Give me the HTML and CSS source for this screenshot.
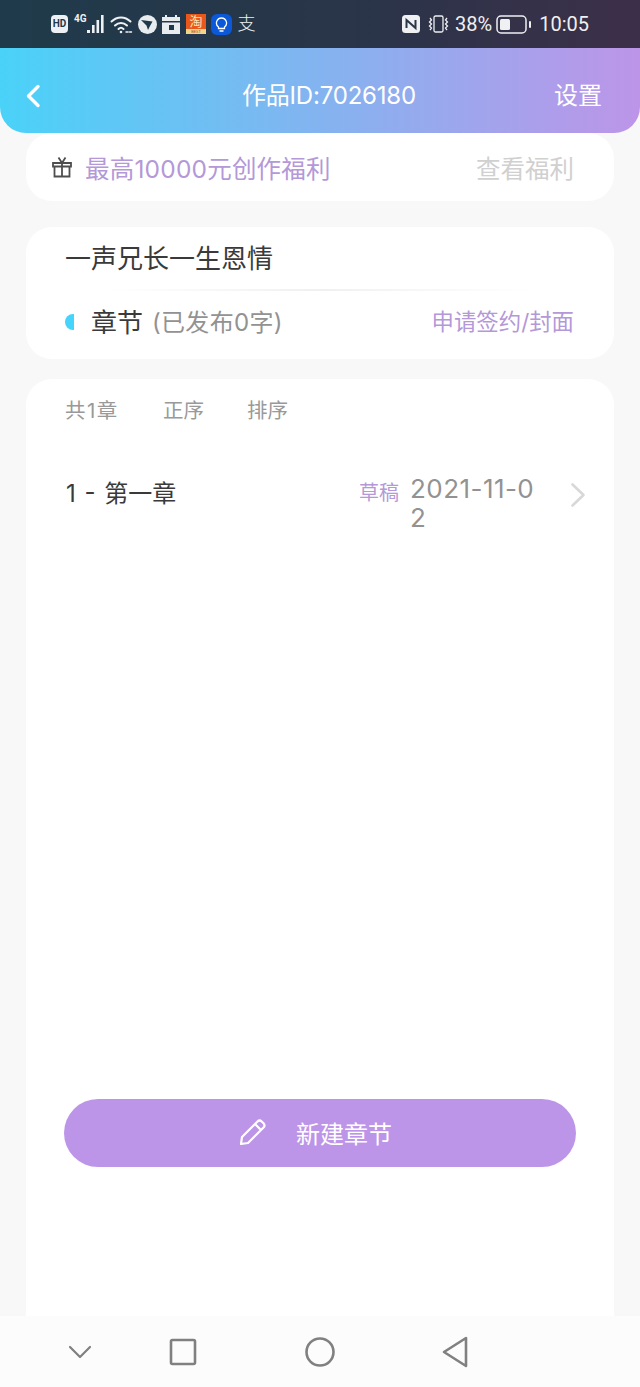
FILE: index.html
```html
<!DOCTYPE html>
<html lang="zh-CN">
<head>
  <meta charset="UTF-8" />
  <meta name="viewport" content="width=device-width, initial-scale=1.0"/>
  <title>作品管理</title>
  <link rel="stylesheet" href="styles.css">
</head>
<body>
  <div class="page">
    <!-- Android status bar -->
    <div class="statusbar">
      <div class="status-left">
        <span class="hd">HD</span>
        <span class="signal">
          <span class="net">4G</span>
          <svg width="19" height="20" viewBox="0 0 19 20"><path d="M1 16h3v3H1zM6 11h2.600v8H6zM10.500 6h2.600v13h-2.600zM15 1h2.600v18H15z" fill="#eef1f3"/></svg>
        </span>
        <svg class="wifi" width="23" height="19" viewBox="0 0 23 19" fill="none" stroke="#eef1f3" stroke-width="2" stroke-linecap="round">
          <path d="M1.500 6.500C7 1 15 1 20.500 6.500"/>
          <path d="M5 10.500c3.500-3.500 8.500-3.500 12 0"/>
          <path d="M8.500 14c1.500-1.500 3.500-1.500 5 0"/>
          <circle cx="11" cy="17" r="1.300" fill="#eef1f3" stroke="none"/>
          <path d="M16 17h6" stroke-width="1.500" stroke-dasharray="2 1.500"/>
        </svg>
        <svg width="19" height="19" viewBox="0 0 19 19"><circle cx="9.500" cy="9.500" r="9.500" fill="#e8ecef"/><path d="M3 5l11.500 1.500L12 11l-2 4-1.500-4.500z" fill="#20394a"/></svg>
        <svg class="cal" width="18" height="19" viewBox="0 0 18 19"><path d="M3 0h2v2h8V0h2v2h3v4H0V2h3zM0 7.500h18V19H0z" fill="#e8ecef"/><rect x="7" y="10" width="5" height="5" fill="#20394a"/></svg>
        <span class="taobao"><span class="taobao-top">淘</span><span class="taobao-bottom">BEST</span></span>
        <span class="bulb">
          <svg width="13" height="15" viewBox="0 0 13 15" fill="none" stroke="#fff" stroke-width="1.300"><path d="M6.500 1a5 5 0 0 0-3 9v1.500h6V10a5 5 0 0 0-3-9zM4.500 14h4"/></svg>
        </span>
        <span class="zhi">支</span>
      </div>
      <div class="status-right">
        <svg width="18" height="18" viewBox="0 0 18 18"><rect width="18" height="18" rx="3.500" fill="#eef0f2"/><path d="M4.500 13V5l9 8V5" fill="none" stroke="#2a3648" stroke-width="2"/></svg>
        <svg class="vib" width="23" height="18" viewBox="0 0 23 18" fill="none" stroke="#eef0f2" stroke-width="1.300"><rect x="7" y="1" width="9" height="16" rx="1.500"/><path d="M3 3l1.500 2-2 2 2 2-2 2 2 2-1.500 2M20 3l-1.500 2 2 2-2 2 2 2-2 2 1.500 2"/></svg>
        <span class="pct">38%</span>
        <svg class="batt" width="35" height="19" viewBox="0 0 35 19"><rect x="1" y="1" width="29" height="17" rx="4" fill="none" stroke="#eef0f2" stroke-width="1.500"/><rect x="4" y="4" width="10" height="11" rx="1.500" fill="#eef0f2"/><rect x="33" y="6" width="2" height="7" rx="1" fill="#eef0f2"/></svg>
        <span class="clock">10:05</span>
      </div>
    </div>

    <!-- title bar -->
    <header class="header">
      <svg class="back" width="16" height="24" viewBox="0 0 16 24" fill="none" stroke="#fff" stroke-width="3.400" stroke-linecap="round" stroke-linejoin="round"><path d="M13 2.500L3.500 12l9.500 9.500"/></svg>
      <h1 class="header-title">作品ID:7026180</h1>
      <a class="header-link">设置</a>
    </header>

    <div class="content">
      <section class="card welfare">
        <svg class="gift" width="22" height="22" viewBox="0 0 22 22" fill="none" stroke="#4e4e4e" stroke-width="1.800"><path d="M2 7h18v3.500H2zM3.500 10.500V20.500h15v-10M11 7v13.500M11 7L7.500 1.500M11 7l3.500-5.500"/></svg>
        <span class="welfare-text">最高10000元创作福利</span>
        <a class="welfare-link">查看福利</a>
      </section>

      <section class="card book">
        <div class="book-title">一声兄长一生恩情</div>
        <div class="divider"></div>
        <div class="book-row">
          <span class="half-dot"></span>
          <span class="book-label">章节</span>
          <span class="book-count">(已发布0字)</span>
          <a class="book-link">申请签约/封面</a>
        </div>
      </section>

      <section class="card chapters">
        <div class="tools">
          <span class="tool-count">共1章</span>
          <span class="tool-order">正序</span>
          <span>排序</span>
        </div>
        <div class="chapter">
          <span class="chapter-name">1 - 第一章</span>
          <span class="chapter-state">草稿</span>
          <span class="chapter-date">2021-11-02</span>
          <svg class="chevron" width="16" height="26" viewBox="0 0 16 26" fill="none" stroke="#d8d8d8" stroke-width="2.600" stroke-linecap="round" stroke-linejoin="round"><path d="M2.500 2.500L13.500 13 2.500 23.500"/></svg>
        </div>
        <button class="new-btn">
          <svg width="28" height="28" viewBox="0 0 28 28" fill="none" stroke="#fff" stroke-width="2.200" stroke-linejoin="round"><path d="M2 26l1-7L18.500 3.500a3 3 0 0 1 4.200 0l1.800 1.800a3 3 0 0 1 0 4.200L9 25zM16 6l6 6"/></svg>
          <span>新建章节</span>
        </button>
      </section>
    </div>

    <!-- Android navigation bar -->
    <nav class="navbar">
      <svg class="nav-hide" width="24" height="14" viewBox="0 0 24 14" fill="none" stroke="#808080" stroke-width="2.200" stroke-linecap="round" stroke-linejoin="round"><path d="M2 2l10 10L22 2"/></svg>
      <svg class="nav-recent" width="28" height="28" viewBox="0 0 28 28" fill="none" stroke="#808080" stroke-width="2.600" stroke-linejoin="round"><rect x="2" y="2" width="24" height="24" rx="1.500"/></svg>
      <svg class="nav-home" width="30" height="30" viewBox="0 0 30 30" fill="none" stroke="#808080" stroke-width="2.600"><circle cx="15" cy="15" r="13.500"/></svg>
      <svg class="nav-back" width="26" height="32" viewBox="0 0 26 32" fill="none" stroke="#808080" stroke-width="2.600" stroke-linejoin="round"><path d="M24 2v28L2 16z"/></svg>
    </nav>
  </div>
</body>
</html>
```

FILE: styles.css
```css
* {
  box-sizing: border-box;
}
body {
  margin: 0;
  font-family: Inter, "Noto Sans CJK SC", sans-serif;
  background: #f8f8f8;
}
h1 {
  margin: 0;
  font-weight: 400;
}
.page {
  width: 640px;
  height: 1387px;
  display: flex;
  flex-direction: column;
  overflow: hidden;
}

/* status bar */
.statusbar {
  height: 48px;
  flex: none;
  display: flex;
  align-items: center;
  justify-content: space-between;
  padding: 0 51px;
  font-family: Roboto, "Noto Sans CJK SC", sans-serif;
  color: #eef0f2;
  background: linear-gradient(90deg, #1f3b4b, #2b3449 60%, #3d2f49);
}
.status-left, .status-right {
  display: flex;
  align-items: center;
}
.status-left {
  gap: 5px;
}
.hd {
  width: 17px;
  height: 18px;
  margin-right: 1px;
  border-radius: 4px;
  background: #eef1f3;
  color: #20394a;
  font-size: 10px;
  font-weight: 700;
  line-height: 18px;
  text-align: center;
}
.signal {
  display: flex;
  align-items: flex-start;
  width: 31px;
}
.net {
  width: 12px;
  font-size: 10px;
  font-weight: 700;
  line-height: 10px;
}
.taobao {
  width: 20px;
  height: 20px;
  margin-left: 1px;
  display: flex;
  flex-direction: column;
  overflow: hidden;
  background: #e8581a;
}
.taobao-top {
  height: 15px;
  color: #fde3b5;
  font-size: 13px;
  line-height: 15px;
  text-align: center;
}
.taobao-bottom {
  height: 5px;
  background: #f3d48c;
  color: #a8491b;
  font-size: 4px;
  line-height: 5px;
  text-align: center;
}
.bulb {
  width: 21px;
  height: 21px;
  display: flex;
  align-items: center;
  justify-content: center;
  border-radius: 6px;
  background: #0b58d8;
}
.zhi {
  width: 19px;
  font-size: 18px;
  font-weight: 300;
  line-height: 20px;
  text-align: center;
}
.vib {
  margin-left: 7px;
}
.pct {
  margin-left: 5px;
  font-size: 20px;
  line-height: 24px;
}
.batt {
  margin-left: 4px;
}
.clock {
  margin-left: 8px;
  font-size: 20px;
  line-height: 24px;
}

/* title bar */
.header {
  height: 85px;
  flex: none;
  position: relative;
  z-index: 1;
  display: flex;
  align-items: center;
  padding: 10px 38px 0 25px;
  border-radius: 0 0 26px 26px;
  color: #fff;
  background: linear-gradient(90deg, #4ad2f8, #bd95e8);
}
.header-title {
  margin-left: 201px;
  font-size: 24px;
  letter-spacing: -0.2px;
  line-height: 32px;
}
.header-link {
  margin-left: auto;
  font-size: 24px;
  line-height: 32px;
}

/* cards */
.content {
  flex: 1;
  min-height: 0;
  display: flex;
  flex-direction: column;
  padding: 0 26px;
}
.card {
  background: #fff;
  border-radius: 26px;
}
.welfare {
  height: 68px;
  flex: none;
  display: flex;
  align-items: center;
  padding: 0 40px 0 25px;
  font-size: 24px;
}
.gift {
  margin-right: 12px;
}
.welfare-text {
  font-size: 24.500px;
  letter-spacing: 0.2px;
  color: #b498d8;
}
.welfare-link {
  margin-left: auto;
  font-size: 24.500px;
  color: #d0d0d0;
}
.book {
  height: 132px;
  flex: none;
  margin-top: 26px;
  padding: 14px 40px 0 39px;
}
.book-title {
  font-size: 26px;
  line-height: 36px;
  color: #3a3a3a;
}
.divider {
  height: 2px;
  margin: 12px 40px 0;
  background: linear-gradient(90deg, #fff, #f0f0f0 50%, #fff);
}
.book-row {
  display: flex;
  align-items: center;
  height: 36px;
  margin-top: 11px;
}
.half-dot {
  width: 9px;
  height: 16px;
  margin: 4px 17px 0 0;
  border-radius: 9px 0 0 9px;
  background: #45d4fb;
}
.book-label {
  font-size: 26px;
  color: #3a3a3a;
}
.book-count {
  margin-left: 9px;
  font-size: 24px;
  letter-spacing: 0.3px;
  color: #929292;
}
.book-link {
  margin-left: auto;
  font-size: 22.400px;
  color: #b498d8;
}
.chapters {
  flex: 1;
  min-height: 0;
  margin-top: 20px;
  border-radius: 26px 26px 0 0;
  display: flex;
  flex-direction: column;
  padding: 18px 38px 0 39px;
}
.tools {
  display: flex;
  font-size: 20.500px;
  line-height: 28px;
  color: #999;
}
.tool-count {
  width: 98px;
  letter-spacing: 1.500px;
}
.tool-order {
  width: 84px;
}
.chapter {
  display: flex;
  align-items: flex-start;
  margin-top: 49px;
}
.chapter-name {
  flex: 1;
  margin: 2px 0 0 1px;
  font-size: 24px;
  word-spacing: 2px;
  line-height: 36px;
  color: #3a3a3a;
}
.chapter-state {
  margin-top: 1px;
  font-size: 20px;
  line-height: 36px;
  color: #b498d8;
}
.chapter-date {
  width: 130px;
  margin-left: 11px;
  font-size: 26px;
  letter-spacing: 0.450px;
  line-height: 29px;
  color: #929292;
  word-break: break-all;
}
.chevron {
  margin: 8px -10px 0 30px;
}
.new-btn {
  height: 68px;
  margin: auto 0 149px -1px;
  padding: 0 9px 2px 0;
  display: flex;
  align-items: center;
  justify-content: center;
  gap: 29px;
  border: none;
  border-radius: 34px;
  background: #bd95e8;
  color: #fff;
  font-family: inherit;
  font-size: 24px;
}

/* navigation bar */
.navbar {
  height: 71px;
  flex: none;
  display: flex;
  align-items: center;
  padding: 0 0 0 68px;
  background: #fcfcfc;
}
.nav-recent {
  margin-left: 77px;
}
.nav-home {
  margin-left: 108px;
}
.nav-back {
  margin-left: 107px;
}
```
